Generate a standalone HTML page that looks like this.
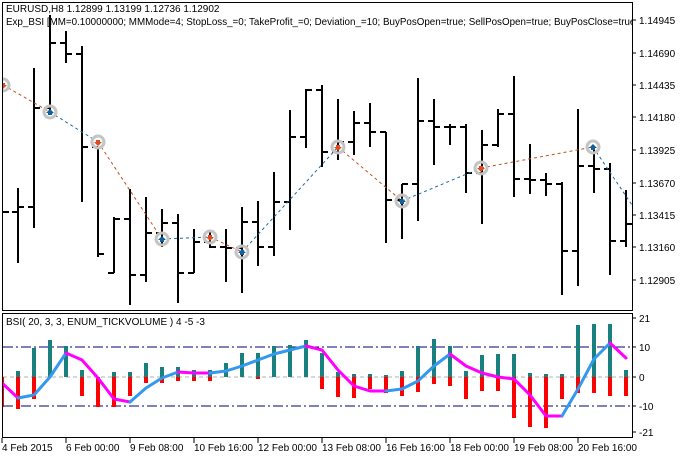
<!DOCTYPE html>
<html><head><meta charset="utf-8"><style>
html,body{margin:0;padding:0;background:#fff;width:684px;height:458px;overflow:hidden}
svg{display:block}
text{font-family:"Liberation Sans",sans-serif;font-size:10px;fill:#000}
</style></head><body>
<svg width="684" height="458" viewBox="0 0 684 458" xmlns="http://www.w3.org/2000/svg">
<defs><clipPath id="cm"><rect x="3" y="3" width="629" height="307"/></clipPath>
<clipPath id="ci"><rect x="3" y="314" width="629" height="123"/></clipPath></defs>
<rect x="2.5" y="2.5" width="630" height="308" fill="none" stroke="#000"/>
<rect x="2.5" y="313.5" width="630" height="124" fill="none" stroke="#000"/>
<g stroke="#000">
<path d="M632 20h4M632 53h4M632 85h4M632 117h4M632 150h4M632 183h4M632 215h4M632 247h4M632 280h4"/>
<path d="M632 318h4M632 347h4M632 377h4M632 406h4M632 432h4"/>
<path d="M2 438v5M66 438v5M130 438v5M194 438v5M258 438v5M322 438v5M386 438v5M450 438v5M514 438v5M578 438v5"/>
</g>
<g>
<text x="639" y="24">1.14945</text><text x="639" y="57">1.14690</text><text x="639" y="89">1.14435</text>
<text x="639" y="121">1.14180</text><text x="639" y="154">1.13925</text><text x="639" y="187">1.13670</text>
<text x="639" y="219">1.13415</text><text x="639" y="251">1.13160</text><text x="639" y="284">1.12905</text>
<text x="639" y="322">21</text><text x="639" y="351">10</text><text x="639" y="381">0</text>
<text x="639" y="410">-10</text><text x="639" y="436">-21</text>
<text x="2" y="451">4 Feb 2015</text><text x="66" y="451">6 Feb 00:00</text><text x="130" y="451">9 Feb 08:00</text>
<text x="194" y="451">10 Feb 16:00</text><text x="258" y="451">12 Feb 00:00</text><text x="322" y="451">13 Feb 08:00</text>
<text x="386" y="451">16 Feb 16:00</text><text x="450" y="451">18 Feb 00:00</text><text x="514" y="451">19 Feb 08:00</text>
<text x="578" y="451">20 Feb 16:00</text>
</g>
<g clip-path="url(#cm)">
<g stroke="#000" stroke-width="2" fill="none">
<path d="M2 212h7"/>
<path d="M18 188V263M12 212h6M18 207h6"/>
<path d="M34 68V228M28 207h6M34 108h6"/>
<path d="M50 15V110M44 108h6M50 43h6"/>
<path d="M66 31V63M60 43h6M66 54h6"/>
<path d="M82 46V202M76 54h6M82 147h6"/>
<path d="M98 147V257M92 147h6M98 254h6"/>
<path d="M114 217V273M108 273h6M114 219h6"/>
<path d="M130 189V305M124 219h6M130 275h6"/>
<path d="M146 197V282M140 275h6M146 233h6"/>
<path d="M162 209V247M156 233h6M162 223h6"/>
<path d="M178 214V303M172 223h6M178 273h6"/>
<path d="M194 229V273M188 273h6M194 242h6"/>
<path d="M210 230V248M204 242h6M210 247h6"/>
<path d="M226 229V282M220 247h6M226 248h6"/>
<path d="M242 207V293M236 248h6M242 222h6"/>
<path d="M258 201V266M252 222h6M258 247h6"/>
<path d="M274 172V256M268 247h6M274 202h6"/>
<path d="M290 110V230M284 202h6M290 137h6"/>
<path d="M306 89V148M300 137h6M306 90h6"/>
<path d="M322 85V167M316 90h6M322 152h6"/>
<path d="M338 99V160M332 152h6M338 142h6"/>
<path d="M354 111V155M348 142h6M354 123h6"/>
<path d="M370 103V147M364 123h6M370 132h6"/>
<path d="M386 132V243M380 132h6M386 200h6"/>
<path d="M402 184V239M396 200h6M402 184h6"/>
<path d="M418 78V221M412 184h6M418 121h6"/>
<path d="M434 99V165M428 121h6M434 127h6"/>
<path d="M450 124V145M444 127h6M450 127h6"/>
<path d="M466 124V193M460 127h6M466 173h6"/>
<path d="M482 130V224M476 173h6M482 145h6"/>
<path d="M498 109V147M492 145h6M498 114h6"/>
<path d="M514 76V197M508 114h6M514 179h6"/>
<path d="M530 144V194M524 179h6M530 180h6"/>
<path d="M546 173V196M540 180h6M546 184h6"/>
<path d="M562 182V295M556 184h6M562 251h6"/>
<path d="M578 109V286M572 251h6M578 166h6"/>
<path d="M594 147V193M588 166h6M594 169h6"/>
<path d="M610 163V275M604 169h6M610 241h6"/>
<path d="M626 190V247M620 241h6M626 224h6"/>
</g>
<g fill="none" stroke-width="1" stroke-dasharray="3,3">
<path d="M3 85L50 112" stroke="#c05020"/>
<path d="M50 112L98 142" stroke="#1a6aa0"/>
<path d="M98 142L162 239" stroke="#c05020"/>
<path d="M162 239L210 237" stroke="#1a6aa0"/>
<path d="M210 237L242 252" stroke="#c05020"/>
<path d="M242 252L338 147" stroke="#1a6aa0"/>
<path d="M338 147L402 201" stroke="#c05020"/>
<path d="M402 201L481 168" stroke="#1a6aa0"/>
<path d="M481 168L593 147" stroke="#c05020"/>
<path d="M593 147L632 205" stroke="#1a6aa0"/>
</g>
<g>
<g fill="none" stroke="#c4c4c4" stroke-width="3">
<circle cx="3" cy="85" r="6"/><circle cx="50" cy="112" r="6"/><circle cx="98" cy="142" r="6"/>
<circle cx="162" cy="239" r="6"/><circle cx="210" cy="237" r="6"/><circle cx="242" cy="252" r="6"/>
<circle cx="338" cy="147" r="6"/><circle cx="402" cy="201" r="6"/><circle cx="481" cy="168" r="6"/>
<circle cx="593" cy="147" r="6"/>
</g>
<g fill="#e04a20">
<path d="M1 83h4v2h2l-4 4-4-4h2z"/><path d="M96 140h4v2h2l-4 4-4-4h2z"/>
<path d="M208 235h4v2h2l-4 4-4-4h2z"/><path d="M336 145h4v2h2l-4 4-4-4h2z"/>
<path d="M479 166h4v2h2l-4 4-4-4h2z"/>
</g>
<g fill="#1060a0">
<path d="M48 115h4v-2h2l-4-4-4 4h2z"/><path d="M160 242h4v-2h2l-4-4-4 4h2z"/>
<path d="M240 255h4v-2h2l-4-4-4 4h2z"/><path d="M400 204h4v-2h2l-4-4-4 4h2z"/>
<path d="M591 150h4v-2h2l-4-4-4 4h2z"/>
</g>
</g>
</g>
<text x="6" y="12">EURUSD,H8  1.12899 1.13199 1.12736 1.12902</text>
<g clip-path="url(#cm)"><text x="6" y="25" style="font-size:9.8px">Exp_BSI [MM=0.10000000; MMMode=4; StopLoss_=0; TakeProfit_=0; Deviation_=10; BuyPosOpen=true; SellPosOpen=true; BuyPosClose=true; SellPosClose=true</text></g>
<g clip-path="url(#ci)">
<path d="M3 347H632M3 406H632" stroke="#00007a" stroke-dasharray="10,3,2,3"/>
<path d="M3 377H632" stroke="#b0b0b0" stroke-dasharray="4,3"/>
<g fill="#1a7f7f">
<rect x="16" y="371" width="4" height="6"/><rect x="32" y="348" width="4" height="29"/><rect x="48" y="340" width="4" height="37"/>
<rect x="64" y="346" width="4" height="31"/><rect x="80" y="370" width="4" height="7"/>
<rect x="112" y="372" width="4" height="5"/><rect x="128" y="372" width="4" height="5"/><rect x="144" y="363" width="4" height="14"/>
<rect x="160" y="367" width="4" height="10"/><rect x="176" y="367" width="4" height="10"/><rect x="192" y="370" width="4" height="7"/>
<rect x="208" y="370" width="4" height="7"/><rect x="224" y="363" width="4" height="14"/><rect x="240" y="353" width="4" height="24"/>
<rect x="256" y="353" width="4" height="24"/><rect x="272" y="346" width="4" height="31"/><rect x="288" y="345" width="4" height="32"/>
<rect x="304" y="340" width="4" height="37"/><rect x="320" y="353" width="4" height="24"/><rect x="336" y="372" width="4" height="5"/>
<rect x="352" y="374" width="4" height="3"/><rect x="368" y="374" width="4" height="3"/><rect x="384" y="375" width="4" height="2"/>
<rect x="400" y="371" width="4" height="6"/><rect x="416" y="346" width="4" height="31"/><rect x="432" y="339" width="4" height="38"/>
<rect x="448" y="346" width="4" height="31"/><rect x="464" y="371" width="4" height="6"/><rect x="480" y="355" width="4" height="22"/>
<rect x="496" y="354" width="4" height="23"/><rect x="512" y="354" width="4" height="23"/><rect x="528" y="373" width="4" height="4"/>
<rect x="544" y="374" width="4" height="3"/><rect x="560" y="374" width="4" height="3"/><rect x="576" y="325" width="4" height="52"/>
<rect x="592" y="324" width="4" height="53"/><rect x="608" y="324" width="4" height="53"/><rect x="624" y="370" width="4" height="7"/>
</g>
<g fill="#ff0000">
<rect x="0" y="377" width="4" height="30"/><rect x="16" y="377" width="4" height="32"/><rect x="32" y="377" width="4" height="22"/>
<rect x="80" y="377" width="4" height="19"/><rect x="96" y="377" width="4" height="30"/><rect x="112" y="377" width="4" height="30"/>
<rect x="128" y="377" width="4" height="19"/><rect x="144" y="377" width="4" height="6"/><rect x="160" y="377" width="4" height="6"/>
<rect x="176" y="377" width="4" height="4"/><rect x="192" y="377" width="4" height="4"/><rect x="208" y="377" width="4" height="4"/>
<rect x="256" y="377" width="4" height="2"/><rect x="320" y="377" width="4" height="12"/><rect x="336" y="377" width="4" height="20"/>
<rect x="352" y="377" width="4" height="21"/><rect x="368" y="377" width="4" height="12"/><rect x="384" y="377" width="4" height="16"/>
<rect x="400" y="377" width="4" height="19"/><rect x="416" y="377" width="4" height="15"/><rect x="432" y="377" width="4" height="7"/>
<rect x="448" y="377" width="4" height="9"/><rect x="464" y="377" width="4" height="22"/><rect x="480" y="377" width="4" height="14"/>
<rect x="496" y="377" width="4" height="14"/><rect x="512" y="377" width="4" height="41"/><rect x="528" y="377" width="4" height="50"/>
<rect x="544" y="377" width="4" height="51"/><rect x="560" y="377" width="4" height="22"/><rect x="576" y="377" width="4" height="16"/>
<rect x="592" y="377" width="4" height="16"/><rect x="608" y="377" width="4" height="19"/><rect x="624" y="377" width="4" height="19"/>
</g>
<g fill="none" stroke-width="3" stroke-linejoin="round" stroke-linecap="round">
<path stroke="#ff00ff" d="M2 383L18 398"/>
<path stroke="#3399ee" d="M18 398L34 395L50 377L66 353"/>
<path stroke="#ff00ff" d="M66 353L82 360L98 378L114 399L130 402"/>
<path stroke="#3399ee" d="M130 402L146 388L162 378L178 372"/>
<path stroke="#ff00ff" d="M178 372L194 373L210 373"/>
<path stroke="#3399ee" d="M210 373L226 371L242 366L258 360L274 354L290 350L306 346"/>
<path stroke="#ff00ff" d="M306 346L322 350L338 370L354 386L370 391L386 391"/>
<path stroke="#3399ee" d="M386 391L402 389L418 381L434 366L450 354"/>
<path stroke="#ff00ff" d="M450 354L466 366L482 373L498 377L514 379L530 395L546 416L562 416"/>
<path stroke="#3399ee" d="M562 416L578 389L594 359L610 343"/>
<path stroke="#ff00ff" d="M610 343L626 358"/>
</g>
</g>
<text x="6" y="325">BSI( 20, 3, 3, ENUM_TICKVOLUME ) 4 -5 -3</text>
</svg>
</body></html>
